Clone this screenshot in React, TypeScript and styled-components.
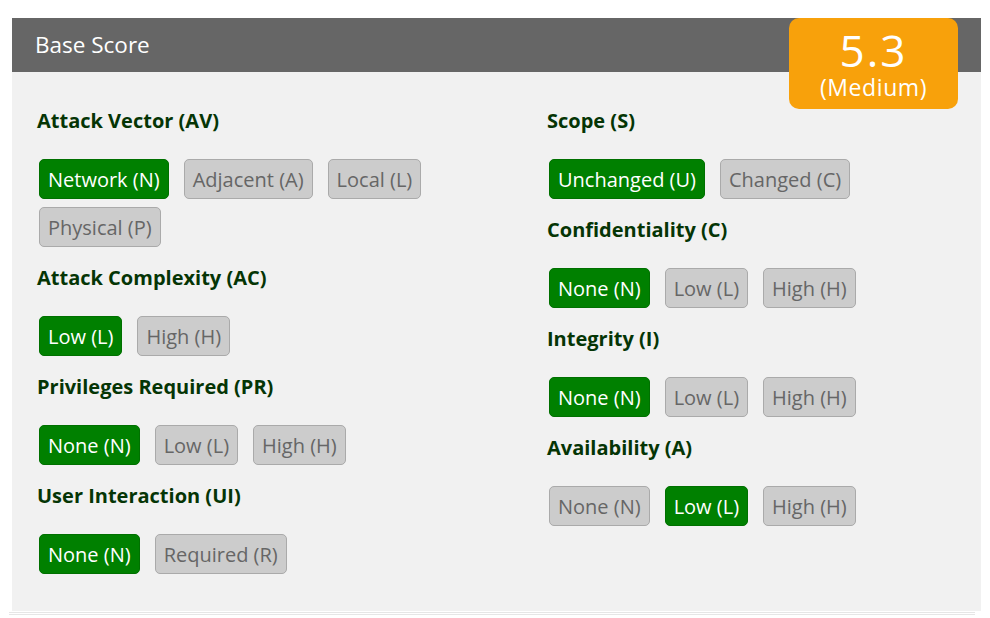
import React from "react";
import styled, { createGlobalStyle } from "styled-components";

const GlobalStyle = createGlobalStyle`
  body {
    margin: 0;
    background: #fff;
    font-family: "Open Sans", "Liberation Sans", sans-serif;
  }
`;

const Page = styled.div`
  padding: 18px 9px 0 12px;
  width: 990px;
  box-sizing: border-box;
`;

const Panel = styled.div`
  position: relative;
  width: 969px;
  background: #f1f1f1;
`;

const Header = styled.div`
  height: 54px;
  background: #666;
  color: #fff;
  font-size: 22.5px;
  line-height: 54px;
  padding-left: 23px;
`;

const ScoreBadge = styled.div`
  position: absolute;
  top: 0;
  left: 777px;
  width: 169px;
  height: 91px;
  border-radius: 10px;
  background: #f8a10b;
  color: #fff;
  display: flex;
  flex-flow: column;
  align-items: center;
`;

const ScoreValue = styled.div`
  font-size: 44px;
  letter-spacing: 2px;
  line-height: 44px;
  margin-top: 10px;
`;

const ScoreLabel = styled.div`
  font-size: 23px;
  letter-spacing: 0.6px;
  line-height: 24px;
  margin-top: 3px;
`;

const Body = styled.div`
  display: grid;
  grid-template-columns: 510px 1fr;
  padding: 36px 0 19px 25px;
`;

const Column = styled.div`
  display: flex;
  flex-flow: column;
`;

const Metric = styled.div`
  display: flex;
  flex-flow: column;
  margin-bottom: 18px;
`;

const MetricTitle = styled.div`
  font-size: 20px;
  font-weight: 700;
  line-height: 26px;
  color: #053505;
  margin-bottom: 25px;
`;

const Options = styled.div`
  display: flex;
  flex-wrap: wrap;
  gap: 8px 15px;
  padding-left: 2px;
  max-width: 440px;
`;

const Option = styled.button<{ $active?: boolean }>`
  box-sizing: border-box;
  font-family: "Open Sans", "Liberation Sans", sans-serif;
  font-size: 20px;
  height: 40px;
  padding: 0 8px;
  border-radius: 5px;
  border: 1px solid ${(p) => (p.$active ? "#007000" : "#aaa")};
  background: ${(p) => (p.$active ? "#008000" : "#ccc")};
  color: ${(p) => (p.$active ? "#fff" : "#666")};
  cursor: pointer;
`;

const BottomRule = styled.div`
  height: 1px;
  margin: 1px 6px 0 -3px;
  border-top: 1px solid #e6e6e6;
  border-bottom: 1px solid #e6e6e6;
`;

type MetricDef = { title: string; options: string[]; active: number };

const left: MetricDef[] = [
  { title: "Attack Vector (AV)", options: ["Network (N)", "Adjacent (A)", "Local (L)", "Physical (P)"], active: 0 },
  { title: "Attack Complexity (AC)", options: ["Low (L)", "High (H)"], active: 0 },
  { title: "Privileges Required (PR)", options: ["None (N)", "Low (L)", "High (H)"], active: 0 },
  { title: "User Interaction (UI)", options: ["None (N)", "Required (R)"], active: 0 },
];

const right: MetricDef[] = [
  { title: "Scope (S)", options: ["Unchanged (U)", "Changed (C)"], active: 0 },
  { title: "Confidentiality (C)", options: ["None (N)", "Low (L)", "High (H)"], active: 0 },
  { title: "Integrity (I)", options: ["None (N)", "Low (L)", "High (H)"], active: 0 },
  { title: "Availability (A)", options: ["None (N)", "Low (L)", "High (H)"], active: 1 },
];

function MetricBlock({ m }: { m: MetricDef }) {
  return (
    <Metric>
      <MetricTitle>{m.title}</MetricTitle>
      <Options>
        {m.options.map((o, i) => (
          <Option key={o} $active={i === m.active}>
            {o}
          </Option>
        ))}
      </Options>
    </Metric>
  );
}

export default function App() {
  return (
    <Page>
      <GlobalStyle />
      <Panel>
        <Header>Base Score</Header>
        <ScoreBadge>
          <ScoreValue>5.3</ScoreValue>
          <ScoreLabel>(Medium)</ScoreLabel>
        </ScoreBadge>
        <Body>
          <Column>
            {left.map((m) => (
              <MetricBlock key={m.title} m={m} />
            ))}
          </Column>
          <Column>
            {right.map((m) => (
              <MetricBlock key={m.title} m={m} />
            ))}
          </Column>
        </Body>
      </Panel>
      <BottomRule />
    </Page>
  );
}
